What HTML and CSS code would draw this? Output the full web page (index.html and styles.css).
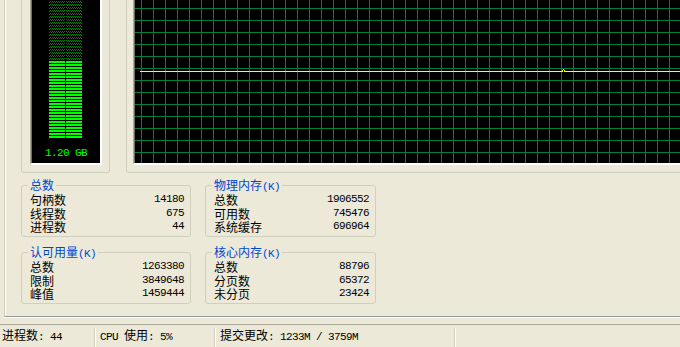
FILE: index.html
```html
<!DOCTYPE html>
<html lang="zh-CN">
<head>
    <meta charset="UTF-8" />
    <meta name="viewport" content="width=device-width, initial-scale=1.0" />
    <title>Windows 任务管理器 - 性能</title>
    <link rel="stylesheet" href="styles.css">
</head>
<body>
    <div class="page">
        <div class="graphs">
            <fieldset class="box meter-box">
                <div class="meter">
                    <svg class="meter-bars" width="68" height="140" shape-rendering="crispEdges">
                        <defs>
                            <pattern id="dim" width="2" height="3" y="1" patternUnits="userSpaceOnUse">
                                <rect width="1" height="1" fill="#008000" />
                                <rect x="1" y="1" width="1" height="1" fill="#008000" />
                            </pattern>
                            <pattern id="lit" width="68" height="3" y="1" patternUnits="userSpaceOnUse">
                                <rect width="68" height="2" fill="#00ff00" />
                            </pattern>
                        </defs>
                        <rect x="17" y="0" width="16" height="61" fill="url(#dim)" />
                        <rect x="34" y="0" width="16" height="61" fill="url(#dim)" />
                        <rect x="17" y="61" width="16" height="77" fill="url(#lit)" />
                        <rect x="34" y="61" width="16" height="77" fill="url(#lit)" />
                    </svg>
                    <div class="meter-label">1.20 GB</div>
                </div>
            </fieldset>
            <fieldset class="box graph-box">
                <div class="graph">
                    <svg width="600" height="163" shape-rendering="crispEdges">
                        <defs>
                            <pattern id="grid" width="12" height="12" x="6" y="8" patternUnits="userSpaceOnUse">
                                <rect width="12" height="1" fill="#008040" />
                                <rect width="1" height="12" fill="#008040" />
                            </pattern>
                        </defs>
                        <rect width="600" height="163" fill="url(#grid)" />
                        <!-- 内存使用记录 -->
                        <g fill="#ffff00">
                            <rect x="5" y="71" width="422" height="1" />
                            <rect x="427" y="70" width="1" height="2" />
                            <rect x="428" y="69" width="1" height="1" />
                            <rect x="429" y="70" width="1" height="2" />
                            <rect x="430" y="71" width="170" height="1" />
                        </g>
                    </svg>
                </div>
            </fieldset>
        </div>

        <div class="totals">
            <fieldset class="box">
                <legend>总数</legend>
                <div class="row"><span>句柄数</span><span class="num">14180</span></div>
                <div class="row"><span>线程数</span><span class="num">675</span></div>
                <div class="row"><span>进程数</span><span class="num">44</span></div>
            </fieldset>
            <fieldset class="box">
                <legend>物理内存<span class="num">(K)</span></legend>
                <div class="row"><span>总数</span><span class="num">1906552</span></div>
                <div class="row"><span>可用数</span><span class="num">745476</span></div>
                <div class="row"><span>系统缓存</span><span class="num">696964</span></div>
            </fieldset>
            <fieldset class="box">
                <legend>认可用量<span class="num">(K)</span></legend>
                <div class="row"><span>总数</span><span class="num">1263380</span></div>
                <div class="row"><span>限制</span><span class="num">3849648</span></div>
                <div class="row"><span>峰值</span><span class="num">1459444</span></div>
            </fieldset>
            <fieldset class="box">
                <legend>核心内存<span class="num">(K)</span></legend>
                <div class="row"><span>总数</span><span class="num">88796</span></div>
                <div class="row"><span>分页数</span><span class="num">65372</span></div>
                <div class="row"><span>未分页</span><span class="num">23424</span></div>
            </fieldset>
        </div>
    </div>

    <div class="statusbar">
        <div class="cell cell-procs">进程数<span class="num">: 44</span></div>
        <div class="cell cell-cpu"><span class="num">CPU </span>使用<span class="num">: 5%</span></div>
        <div class="cell cell-commit">提交更改<span class="num">: 1233M / 3759M</span></div>
        <div class="cell cell-rest"></div>
    </div>
</body>
</html>
```

FILE: styles.css
```css
body {
    margin: 0;
    background-color: #ece9d8;
    font-family: "Noto Sans CJK SC", sans-serif;
    font-size: 12px;
    color: #000;
    overflow: hidden;
}
.num {
    font-family: "Liberation Mono", monospace;
    font-size: 11px;
    letter-spacing: -0.6px;
    line-height: 0;
}
.page {
    height: 316px;
    margin-left: 4px;
    padding-left: 16px;
    border-left: 1px solid #d0cdbd;
    border-bottom: 1px solid #919b9c;
    box-shadow: inset 1px 0 #fff, 0 1px #fff;
}
.box {
    box-sizing: border-box;
    min-width: 0;
    margin: 0;
    padding: 2px 6px 2.5px 8px;
    border: 1px solid #d0d0bf;
    border-radius: 3px;
}
.box legend {
    margin-left: -2px;
    padding: 0 2px;
    line-height: 12px;
    color: #0046d5;
}
.graphs {
    display: flex;
    gap: 16px;
}
.graphs .box {
    border-top: none;
    border-radius: 0 0 3px 3px;
    padding: 0 7px 7px 8px;
}
.meter-box {
    width: 89px;
    flex: none;
}
.meter {
    display: flex;
    flex-direction: column;
    height: 163px;
    padding-left: 1px;
    background: #000;
    border-left: 1px solid #aca899;
    border-right: 2px solid #fff;
    border-bottom: 2px solid #fff;
    box-shadow: inset 1px 0 #716f64;
}
.meter-bars {
    display: block;
}
.meter-label {
    margin-top: 7px;
    line-height: 12px;
    text-align: center;
    color: #00ff00;
    font-family: "Liberation Mono", monospace;
    font-size: 11px;
    letter-spacing: -0.6px;
}
.graphs .graph-box {
    width: 620px;
    flex: none;
    padding-left: 6px;
}
.graph {
    height: 163px;
    padding-left: 1px;
    background: #000;
    border-left: 1px solid #aca899;
    border-bottom: 2px solid #fff;
    box-shadow: inset 1px 0 #716f64;
}
.graph svg {
    display: block;
}
.totals {
    display: grid;
    grid-template-columns: 170px 171px;
    column-gap: 14px;
    row-gap: 9px;
    margin-top: 6px;
}
.row {
    display: flex;
    justify-content: space-between;
    line-height: 13.5px;
}
.row .num {
    line-height: 13.5px;
}
.statusbar {
    display: flex;
    height: 19px;
    margin-top: 7px;
    padding-top: 3px;
    border-top: 1px solid #aca899;
}
.cell {
    box-sizing: border-box;
    line-height: 14px;
    white-space: nowrap;
    border-right: 1px solid #fff;
    box-shadow: inset -1px 0 #d6d2c2;
}
.cell-procs {
    width: 96px;
    padding-left: 2px;
}
.cell-cpu {
    width: 120px;
    padding-left: 4px;
}
.cell-commit {
    width: 240px;
    padding-left: 4px;
}
.cell-rest {
    flex: 1;
    border-right: none;
    box-shadow: none;
}
```
